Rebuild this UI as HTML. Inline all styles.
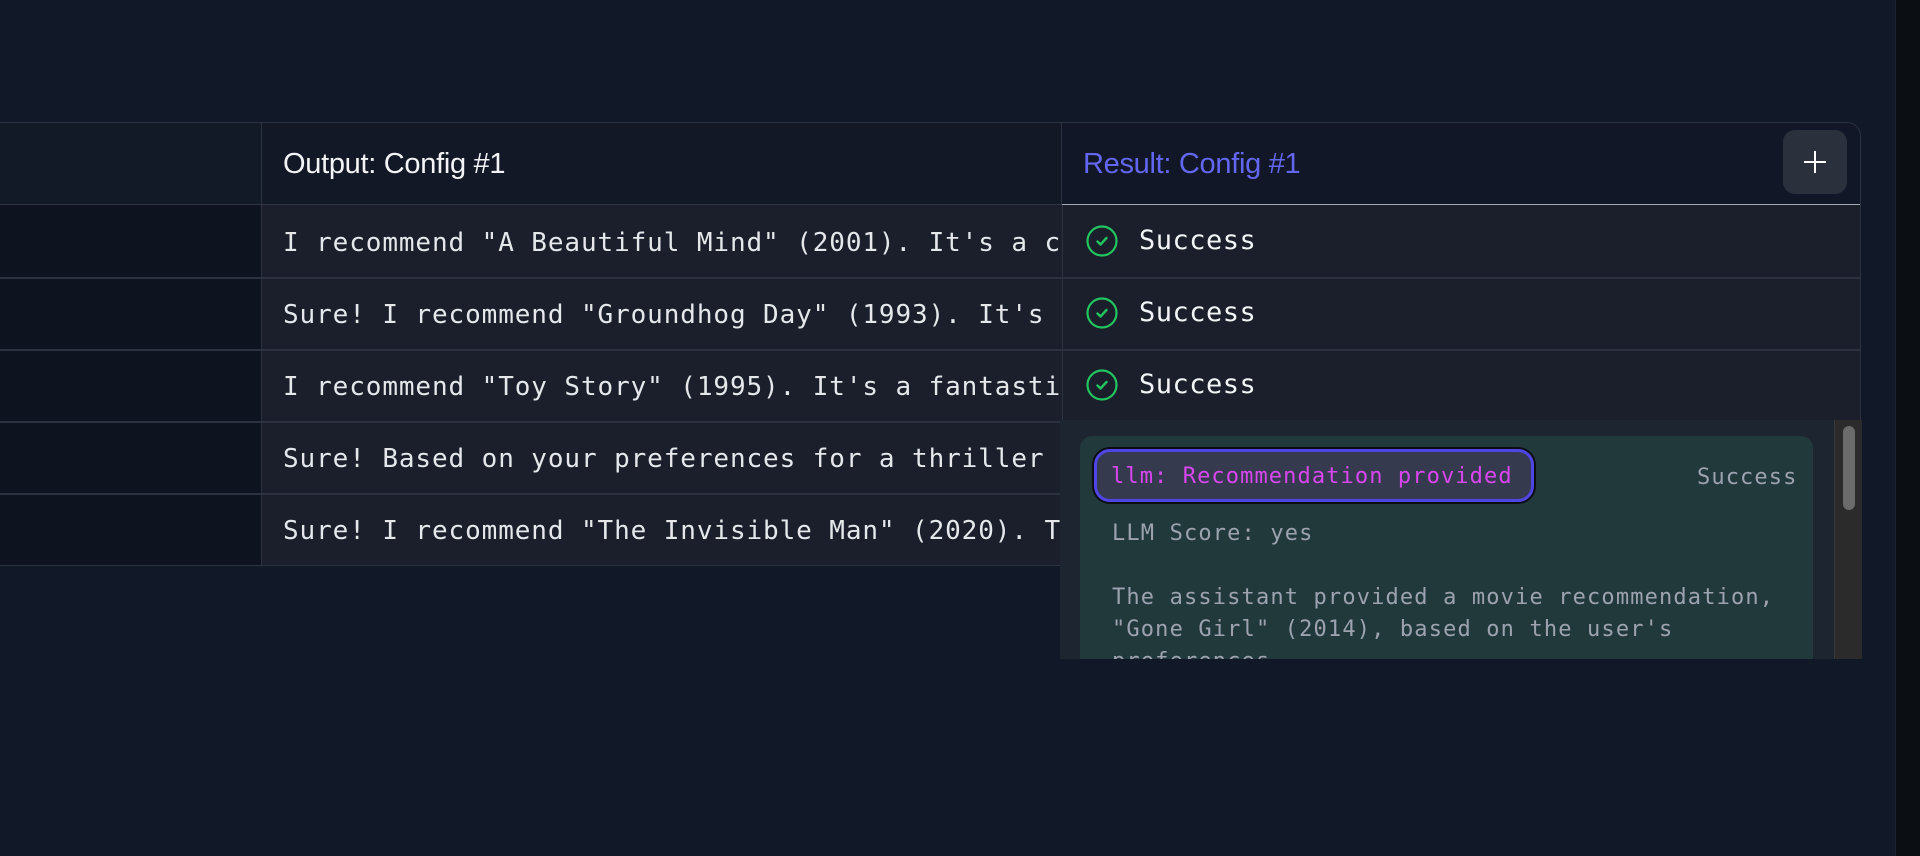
<!DOCTYPE html>
<html><head><meta charset="utf-8"><style>
*{box-sizing:border-box;margin:0;padding:0}
body{width:1920px;height:856px;background:#111827;overflow:hidden;position:relative;font-family:"Liberation Sans",sans-serif}
.abs{position:absolute}
.mono{font-family:"DejaVu Sans Mono","Liberation Mono",monospace}
.rightbar{left:1895px;top:0;width:25px;height:856px;background:#0b0e13;border-left:1px solid #1c2230}
.table{left:-20px;top:122px;width:1881px;height:444px;border:1px solid #2c3240;border-radius:0 14px 0 0;overflow:hidden;background:#121826}
.cell{position:absolute;overflow:hidden;white-space:nowrap}
.txt{color:#e5e7eb;font-size:26px;line-height:74px;padding-left:21px;letter-spacing:0.9px}
</style></head><body>
<div class="abs rightbar"></div>
<div class="abs table">
  <div class="cell" style="left:0;top:0;width:281px;height:82px;background:#131a27;border-right:1px solid #2c3240"></div>
  <div class="cell" style="left:281px;top:0;width:800px;height:82px;background:#121826;border-right:1px solid #2c3240;color:#f3f4f6;font-size:29px;line-height:82px;padding-left:21px;letter-spacing:-0.3px">Output: Config #1</div>
  <div class="cell" style="left:1081px;top:0;width:800px;height:82px;background:#111726;color:#6366f1;font-size:29px;line-height:82px;padding-left:21px;letter-spacing:-0.3px">Result: Config #1</div>
  <div class="abs" style="left:1802px;top:7px;width:64px;height:64px;background:#2a303c;border-radius:12px"></div>
  <div class="abs" style="left:1833px;top:28px;width:2px;height:22px;background:#fff"></div>
  <div class="abs" style="left:1823px;top:38px;width:22px;height:2px;background:#fff"></div>
  <div class="abs" style="left:0;top:81px;width:1081px;height:1px;background:#2f3542"></div>
  <div class="abs" style="left:1081px;top:81px;width:800px;height:4px;background:#a3a9b3"></div>
  <div class="abs" style="left:0;top:82px;width:281px;height:362px;background:#0e141f;border-right:1px solid #2c3240"></div>
  <div class="abs" style="left:281px;top:82px;width:1600px;height:362px;background:#1a1f2b"></div>
  <div class="abs" style="left:1081px;top:82px;width:1px;height:362px;background:#2c3240"></div>
  <div class="abs" style="left:0;top:154px;width:1881px;height:2px;background:#2c3240"></div>
  <div class="abs" style="left:0;top:226px;width:1881px;height:2px;background:#2c3240"></div>
  <div class="abs" style="left:0;top:298px;width:1881px;height:2px;background:#2c3240"></div>
  <div class="abs" style="left:0;top:370px;width:1881px;height:2px;background:#2c3240"></div>
  <div class="cell txt mono" style="left:281px;top:83px;width:800px">I recommend "A Beautiful Mind" (2001). It's a captivating</div>
  <div class="cell txt mono" style="left:281px;top:155px;width:800px">Sure! I recommend "Groundhog Day" (1993). It's a</div>
  <div class="cell txt mono" style="left:281px;top:227px;width:800px">I recommend "Toy Story" (1995). It's a fantastic</div>
  <div class="cell txt mono" style="left:281px;top:299px;width:800px">Sure! Based on your preferences for a thriller</div>
  <div class="cell txt mono" style="left:281px;top:371px;width:800px">Sure! I recommend "The Invisible Man" (2020). The</div>
</div>
<svg class="abs" style="left:1086px;top:225px" width="32" height="32" viewBox="0 0 32 32"><circle cx="16" cy="16" r="14.5" fill="none" stroke="#22c55e" stroke-width="2.2"/><path d="M11.5 16.5l3 3 6-6.5" fill="none" stroke="#22c55e" stroke-width="2.4" stroke-linecap="round" stroke-linejoin="round"/></svg>
<svg class="abs" style="left:1086px;top:297px" width="32" height="32" viewBox="0 0 32 32"><circle cx="16" cy="16" r="14.5" fill="none" stroke="#22c55e" stroke-width="2.2"/><path d="M11.5 16.5l3 3 6-6.5" fill="none" stroke="#22c55e" stroke-width="2.4" stroke-linecap="round" stroke-linejoin="round"/></svg>
<svg class="abs" style="left:1086px;top:369px" width="32" height="32" viewBox="0 0 32 32"><circle cx="16" cy="16" r="14.5" fill="none" stroke="#22c55e" stroke-width="2.2"/><path d="M11.5 16.5l3 3 6-6.5" fill="none" stroke="#22c55e" stroke-width="2.4" stroke-linecap="round" stroke-linejoin="round"/></svg>
<div class="abs mono" style="left:1139px;top:223px;color:#f3f4f6;font-size:27px;line-height:36px;letter-spacing:0.5px">Success</div>
<div class="abs mono" style="left:1139px;top:295px;color:#f3f4f6;font-size:27px;line-height:36px;letter-spacing:0.5px">Success</div>
<div class="abs mono" style="left:1139px;top:367px;color:#f3f4f6;font-size:27px;line-height:36px;letter-spacing:0.5px">Success</div>
<div class="abs" style="left:1060px;top:420px;width:802px;height:239px;background:#1c2530;overflow:hidden">
  <div class="abs" style="left:20px;top:16px;width:733px;height:260px;background:#22393c;border-radius:12px"></div>
  <div class="abs mono" style="left:34px;top:29px;width:440px;height:53px;border:3px solid #4f46e5;box-shadow:0 0 0 2px #0b0d12;border-radius:16px;background:#363a4f;color:#d946ef;font-size:22px;line-height:50px;padding-left:14px;white-space:nowrap;letter-spacing:1.1px">llm: Recommendation provided</div>
  <div class="abs mono" style="left:637px;top:38px;width:100px;text-align:right;color:#9ca3af;font-size:22px;line-height:40px;letter-spacing:1.1px">Success</div>
  <div class="abs mono" style="left:52px;top:98px;color:#9ca3af;font-size:22px;line-height:32px;white-space:pre;letter-spacing:1.15px">LLM Score: yes

The assistant provided a movie recommendation,
"Gone Girl" (2014), based on the user's
preferences.</div>
  <div class="abs" style="left:774px;top:0;width:28px;height:239px;background:#2b2b2b;border-left:1px solid #3a3a3a"></div>
  <div class="abs" style="left:783px;top:6px;width:12px;height:84px;background:#6b6b6b;border-radius:6px"></div>
</div>
</body></html>
